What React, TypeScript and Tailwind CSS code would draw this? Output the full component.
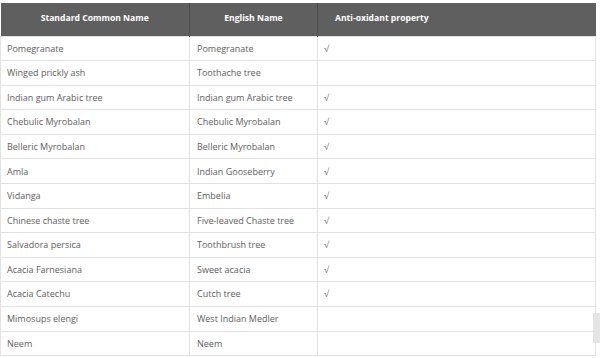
const rows: [string, string, boolean][] = [
  ["Pomegranate", "Pomegranate", true],
  ["Winged prickly ash", "Toothache tree", false],
  ["Indian gum Arabic tree", "Indian gum Arabic tree", true],
  ["Chebulic Myrobalan", "Chebulic Myrobalan", true],
  ["Belleric Myrobalan", "Belleric Myrobalan", true],
  ["Amla", "Indian Gooseberry", true],
  ["Vidanga", "Embelia", true],
  ["Chinese chaste tree", "Five-leaved Chaste tree", true],
  ["Salvadora persica", "Toothbrush tree", true],
  ["Acacia Farnesiana", "Sweet acacia", true],
  ["Acacia Catechu", "Cutch tree", true],
  ["Mimosups elengi", "West Indian Medler", false],
  ["Neem", "Neem", false],
]

export default function App() {
  return (
    <div
      className="relative w-[600px] h-[358px] overflow-hidden bg-white pt-[3px]"
      style={{ fontFamily: "'Open Sans', sans-serif" }}
    >
      <table className="w-[596px] table-fixed border-collapse text-[9px] text-[#5e5e5e]">
        <colgroup>
          <col className="w-[189px]" />
          <col className="w-[128px]" />
          <col />
        </colgroup>
        <thead>
          <tr className="h-[33px] bg-[#5f5f5f] text-white font-bold text-[8.6px]">
            <th className="border-r border-[#4a4a4a] text-center align-top pt-[9px]">Standard Common Name</th>
            <th className="border-r border-[#4a4a4a] text-center align-top pt-[9px]">English Name</th>
            <th className="pl-[17px] text-left align-top pt-[9px]">Anti-oxidant property</th>
          </tr>
        </thead>
        <tbody>
          {rows.map(([a, b, ok]) => (
            <tr key={a} className="h-[24.6px]">
              <td className="border border-[#e2e2e2] pl-[6px]">{a}</td>
              <td className="border border-[#e2e2e2] pl-[7px]">{b}</td>
              <td className="border border-[#e2e2e2] pl-[6px] text-[#777]">{ok ? "√" : ""}</td>
            </tr>
          ))}
        </tbody>
      </table>
      <div className="absolute right-0 top-[313px] h-[30px] w-[7px] bg-[#e4e4e4]" />
    </div>
  )
}
